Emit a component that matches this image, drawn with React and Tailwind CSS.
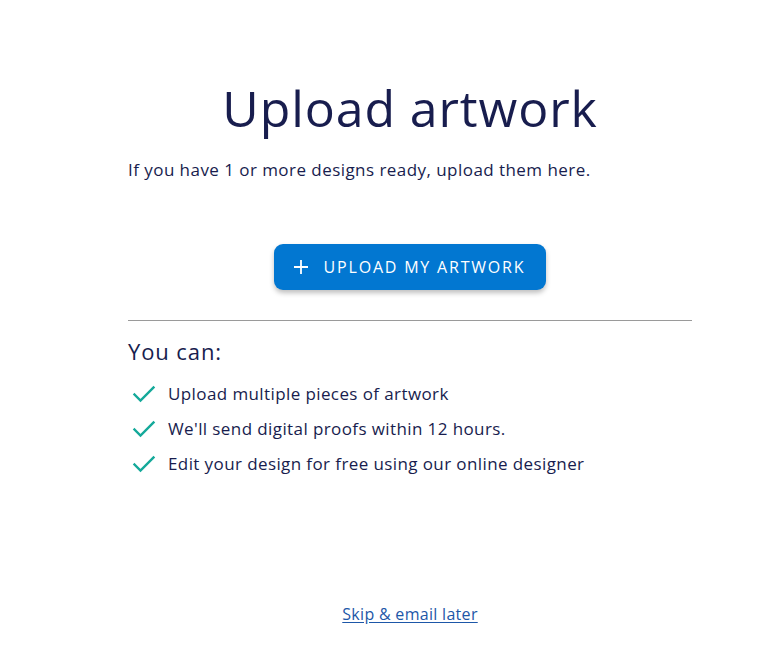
import React from "react";

function Check() {
  return (
    <svg width="24" height="20" viewBox="0 0 24 20" fill="none" className="shrink-0">
      <path d="M2.5 10.5 L8.5 16.5 L21.5 3.5" stroke="#14a99a" strokeWidth="2.4" strokeLinecap="square" />
    </svg>
  );
}

export default function App() {
  const items = [
    "Upload multiple pieces of artwork",
    "We'll send digital proofs within 12 hours.",
    "Edit your design for free using our online designer",
  ];
  return (
    <div className="min-h-[652px] bg-white text-[#181d4e]" style={{ fontFamily: '"Open Sans", sans-serif' }}>
      <div className="ml-[128px] w-[564px] flex flex-col pt-[76px]">
        <h1 className="text-center text-[50px] leading-[64px] tracking-[0.9px] font-normal">Upload artwork</h1>
        <p className="mt-[17px] text-[17px] leading-[26px] tracking-[0.45px]">If you have 1 or more designs ready, upload them here.</p>
        <div className="mt-[61px] flex justify-center">
          <button className="flex items-center gap-[15px] h-[46px] pl-[19px] pr-[21px] rounded-[9px] bg-[#0277d1] text-white text-[16px] tracking-[1.8px] shadow-[0_3px_5px_rgba(0,0,0,0.25)]">
            <svg width="16" height="16" viewBox="0 0 16 16"><path d="M8 1V15M1 8H15" stroke="white" strokeWidth="1.8" /></svg>
            UPLOAD MY ARTWORK
          </button>
        </div>
        <div className="mt-[30px] h-px bg-[#9a9a9a]" />
        <h2 className="mt-[16px] text-[22px] leading-[28px] tracking-[0.9px]">You can:</h2>
        <ul className="mt-[16px] flex flex-col gap-[9px]">
          {items.map((t) => (
            <li key={t} className="flex items-center gap-[12px] h-[26px] pl-[4px] text-[17px] tracking-[0.4px]">
              <Check />
              <span>{t}</span>
            </li>
          ))}
        </ul>
        <div className="mt-[125px] flex justify-center">
          <a href="#" className="text-[16px] tracking-[0.3px] text-[#1d57a8] underline underline-offset-2">Skip &amp; email later</a>
        </div>
      </div>
    </div>
  );
}
